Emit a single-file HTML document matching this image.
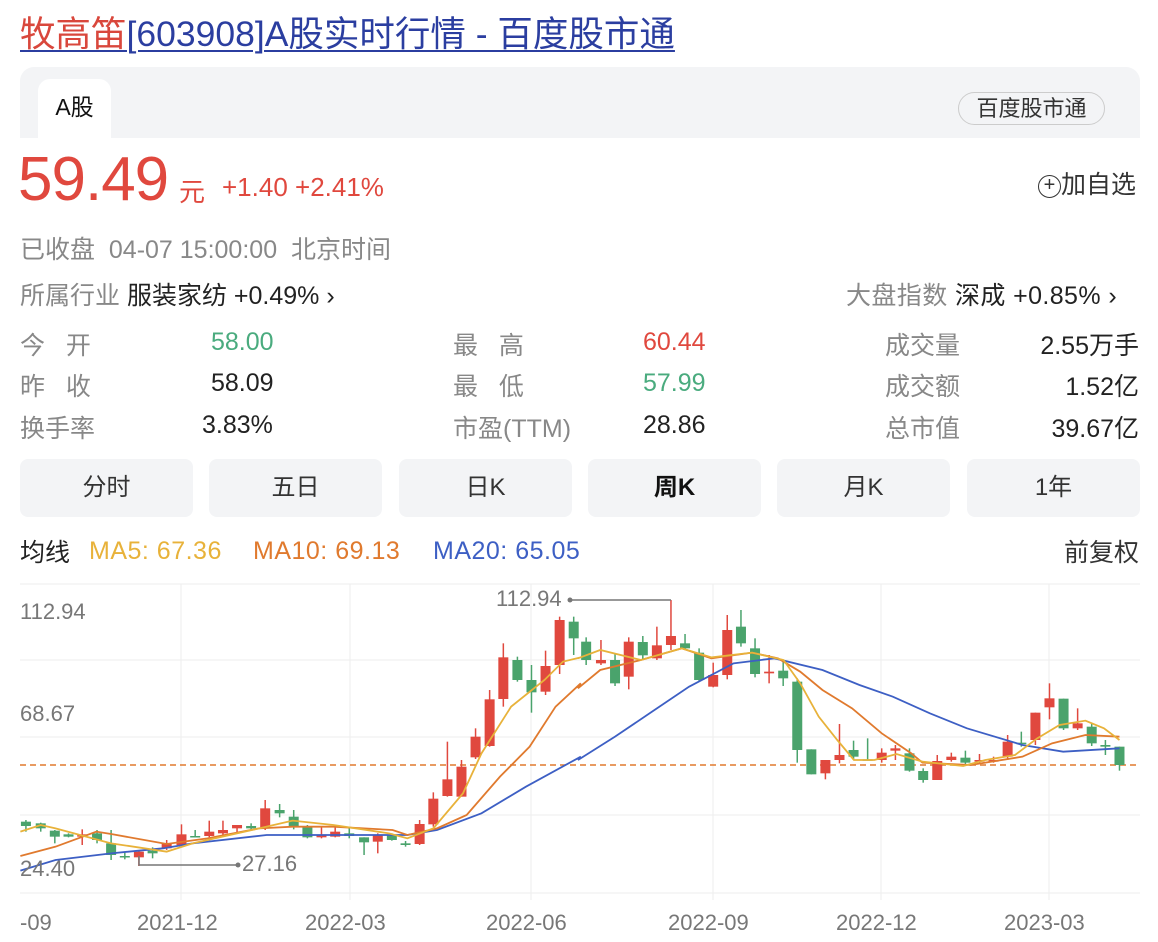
<!DOCTYPE html>
<html><head><meta charset="utf-8">
<style>
*{margin:0;padding:0;box-sizing:border-box}
body{width:1158px;height:942px;background:#fff;font-family:"Liberation Sans","Noto Sans CJK SC",sans-serif;position:relative;overflow:hidden;color:#222}
.a{position:absolute;white-space:nowrap}
.t{top:6px;left:20px;font-size:35.5px;color:#2b3ea0;text-decoration:underline;text-decoration-thickness:2px;text-underline-offset:4px}
.t span{color:#d9473c}
.card{top:67px;left:20px;width:1120px;height:71px;background:#f3f4f6;border-radius:14px 14px 0 0}
.tab{top:79px;left:38px;width:73px;height:59px;background:#fff;border-radius:12px 12px 0 0;font-size:23px;text-align:center;line-height:56px;color:#111}
.pill{top:92px;left:958px;width:147px;height:33px;border:1px solid #ccc;border-radius:17px;font-size:22px;line-height:31px;text-align:center;color:#333}
.lbl{font-size:25px;color:#888}
.val{font-size:25px;color:#222}
.red{color:#e0483e}.grn{color:#4aab7e}.gr{color:#888}
.btn{top:459px;height:58px;width:173px;background:#f3f4f6;border-radius:8px;font-size:24px;text-align:center;line-height:58px;color:#333}
.lg{top:533px;font-size:25px}
.lm{top:537px;font-size:25px;letter-spacing:0.5px}
</style></head><body>
<div class="a t"><span>牧高笛</span>[603908]A股实时行情 - 百度股市通</div>
<div class="a card"></div>
<div class="a tab">A股</div>
<div class="a pill">百度股市通</div>
<div class="a red" style="top:144px;left:18px;font-size:62px;letter-spacing:-1px">59.49</div>
<div class="a red" style="top:172px;left:179px;font-size:26px">元</div>
<div class="a red" style="top:172px;left:222px;font-size:26px">+1.40 +2.41%</div>
<div class="a" style="top:165px;left:1038px;font-size:25px;color:#333"><span style="display:inline-block;width:23px;height:23px;border:1.5px solid #333;border-radius:50%;text-align:center;line-height:19px;font-size:20px;vertical-align:2px">+</span>加自选</div>
<div class="a gr" style="top:230px;left:20px;font-size:25px">已收盘&nbsp; 04-07 15:00:00&nbsp; 北京时间</div>
<div class="a" style="top:276px;left:20px;font-size:25px"><span class="gr">所属行业</span> 服装家纺 +0.49% ›</div>
<div class="a" style="top:276px;left:846px;font-size:25px;letter-spacing:0.4px"><span class="gr">大盘指数</span> 深成 +0.85% ›</div>

<div class="a lbl" style="top:326px;left:20px">今&nbsp;&nbsp;&nbsp;开</div>
<div class="a val grn" style="top:328px;left:211px">58.00</div>
<div class="a lbl" style="top:367px;left:20px">昨&nbsp;&nbsp;&nbsp;收</div>
<div class="a val" style="top:369px;left:211px">58.09</div>
<div class="a lbl" style="top:409px;left:20px">换手率</div>
<div class="a val" style="top:411px;left:202px">3.83%</div>
<div class="a lbl" style="top:326px;left:453px">最&nbsp;&nbsp;&nbsp;高</div>
<div class="a val red" style="top:328px;left:643px">60.44</div>
<div class="a lbl" style="top:367px;left:453px">最&nbsp;&nbsp;&nbsp;低</div>
<div class="a val grn" style="top:369px;left:643px">57.99</div>
<div class="a lbl" style="top:409px;left:453px">市盈(TTM)</div>
<div class="a val" style="top:411px;left:643px">28.86</div>
<div class="a lbl" style="top:326px;left:885px">成交量</div>
<div class="a val" style="top:326px;right:19px">2.55万手</div>
<div class="a lbl" style="top:367px;left:885px">成交额</div>
<div class="a val" style="top:367px;right:19px">1.52亿</div>
<div class="a lbl" style="top:409px;left:885px">总市值</div>
<div class="a val" style="top:409px;right:19px">39.67亿</div>

<div class="a btn" style="left:20px">分时</div>
<div class="a btn" style="left:209px">五日</div>
<div class="a btn" style="left:399px">日K</div>
<div class="a btn" style="left:588px;font-weight:bold;color:#111">周K</div>
<div class="a btn" style="left:777px">月K</div>
<div class="a btn" style="left:967px">1年</div>

<div class="a lg" style="left:20px">均线</div>
<div class="a lm" style="left:89px;color:#e8b23a">MA5: 67.36</div>
<div class="a lm" style="left:253px;color:#e07a2e">MA10: 69.13</div>
<div class="a lm" style="left:433px;color:#3d5fc4">MA20: 65.05</div>
<div class="a lg" style="right:19px;color:#333">前复权</div>

<svg class="a" style="top:0;left:0" width="1158" height="942" id="ch">
<g stroke="#eee" stroke-width="1">
<line x1="20" x2="1140" y1="584" y2="584"/><line x1="20" x2="1140" y1="660" y2="660"/><line x1="20" x2="1140" y1="737" y2="737"/><line x1="20" x2="1140" y1="815" y2="815"/><line x1="20" x2="1140" y1="893" y2="893"/>
<line x1="181" x2="181" y1="584" y2="900"/><line x1="350" x2="350" y1="584" y2="900"/><line x1="531" x2="531" y1="584" y2="900"/><line x1="713" x2="713" y1="584" y2="900"/><line x1="881" x2="881" y1="584" y2="900"/><line x1="1049" x2="1049" y1="584" y2="900"/>
</g>
<line x1="20" x2="1140" y1="765" y2="765" stroke="#e07a2e" stroke-width="1.5" stroke-dasharray="6,4"/>
<g id="cd"></g>
<g id="ml" fill="none" stroke-width="1.8"></g>
<polyline points="139,856 139,865 238,865" fill="none" stroke="#777" stroke-width="1.5"/><circle cx="238" cy="865" r="2.5" fill="#777"/>
<polyline points="570,600 671,600 671,600" fill="none" stroke="#777" stroke-width="1.5"/><circle cx="570" cy="600" r="2.5" fill="#777"/>
<g font-family="Liberation Sans" font-size="22" fill="#777">
<text x="20" y="619">112.94</text><text x="20" y="721">68.67</text><text x="20" y="876">24.40</text>
<text x="242" y="871">27.16</text><text x="496" y="606">112.94</text>
<text x="20" y="930">-09</text><text x="137" y="930">2021-12</text><text x="305" y="930">2022-03</text><text x="486" y="930">2022-06</text><text x="668" y="930">2022-09</text><text x="836" y="930">2022-12</text><text x="1004" y="930">2023-03</text>
</g>
</svg>
<script>
var c1=[[70,'g',725,738,720,755],[110,'g',730,745,728,755],[148,'g',752,770,750,790],[185,'g',763,770,760,772],[222,'r',763,770,748,795],[262,'g',760,780,750,790],[300,'g',790,825,750,840],[337,'g',828,832,818,838],[375,'r',815,832,810,858],[412,'g',812,820,802,835],[450,'r',790,805,780,810],[490,'r',763,795,733,800],[527,'g',768,772,750,772],[565,'r',755,768,722,772],[602,'r',750,760,722,765],[640,'r',735,745,735,760],[678,'g',738,745,730,750],[716,'r',685,745,660,750],[755,'g',690,700,672,712],[793,'g',710,740,690,748],[830,'g',740,772,735,775],[868,'r',765,772,740,775],[905,'r',755,770,740,772],[943,'g',760,768,740,775],[983,'g',772,787,772,825],[1020,'r',765,785,760,820],[1058,'g',765,780,760,782],[1095,'g',790,795,783,800],[1133,'r',732,792,720,795],[1170,'r',656,733,637,740],[1208,'r',598,648,485,650],[1246,'r',560,650,540,650],[1284,'r',470,532,445,537],[1322,'r',358,498,330,500],[1359,'r',232,357,190,380],[1397,'g',240,300,230,305],[1435,'g',300,337,255,398],[1473,'r',258,335,212,345],[1511,'r',120,255,110,282],[1549,'g',125,175,110,225]];
var c2=[[22,'g',185,240,172,255],[62,'r',240,250,180,255],[100,'g',240,310,220,318],[137,'r',185,290,172,328],[175,'g',186,226,168,240],[213,'r',196,235,140,240],[251,'r',168,195,60,210],[289,'g',190,205,162,210],[327,'g',218,300,205,305],[365,'r',285,320,248,322],[403,'r',150,285,105,298],[440,'g',140,190,90,200],[478,'g',205,282,175,292],[516,'r',275,280,225,310],[554,'g',272,295,240,318],[592,'g',305,510,295,548],[630,'g',508,583,508,583],[668,'r',540,580,540,598],[706,'r',525,540,432,550],[744,'g',510,530,482,540],[782,'g',538,541,475,541],[820,'r',518,540,505,548],[857,'r',505,512,495,540],[895,'g',520,572,505,575],[932,'g',573,600,565,608],[970,'r',543,600,525,600],[1008,'r',530,540,518,545],[1046,'g',533,548,512,552],[1084,'r',540,545,522,550],[1122,'r',540,545,530,548],[1160,'r',485,530,465,540],[1197,'g',488,492,455,500],[1235,'r',398,480,398,495],[1273,'r',355,382,310,418],[1311,'g',356,445,356,450],[1349,'r',430,445,385,450],[1387,'g',440,490,432,498],[1424,'g',495,500,480,525],[1462,'g',500,555,500,572]];
var s='';
function add(a,ox){a.forEach(function(d){var x=d[0]/2.7+ox,col=d[1]=='r'?'#e0483e':'#4aa36c';var t=d[2]/3+580,b=d[3]/3+580,h=d[4]/3+580,l=d[5]/3+580;if(b-t<1.5)b=t+1.5;
s+='<line x1="'+x+'" x2="'+x+'" y1="'+h+'" y2="'+l+'" stroke="'+col+'" stroke-width="1.5"/><rect x="'+(x-5)+'" y="'+t+'" width="10" height="'+(b-t)+'" fill="'+col+'"/>';});}
add(c1,0);add(c2,578);document.getElementById('cd').innerHTML=s;
function pl(a,b,col){var p=[];a.forEach(function(q){p.push((q[0]/2.7)+','+(q[1]/3+580))});b.forEach(function(q){p.push((q[0]/2.7+578)+','+(q[1]/3+580))});return '<polyline points="'+p.join(' ')+'" stroke="'+col+'"/>';}
var m=pl([[55,872],[150,840],[300,820],[440,805],[520,790],[720,765],[850,765],[1100,765],[1180,750],[1300,700],[1420,620],[1568,530]],[[0,540],[100,470],[200,395],[300,320],[420,250],[530,235],[660,270],[760,315],[850,350],[950,400],[1050,445],[1200,495],[1310,515],[1462,505]],'#3d5fc4');
m+=pl([[55,828],[150,800],[260,755],[300,762],[450,792],[560,775],[700,745],[790,740],[900,740],[1060,750],[1100,765],[1180,745],[1260,705],[1350,590],[1430,500],[1500,380],[1568,310]],[[0,325],[60,270],[170,240],[280,205],[360,235],[470,218],[540,235],[600,275],[660,330],[740,385],[820,460],[900,520],[930,548],[1060,555],[1200,530],[1280,490],[1370,465],[1462,470]],'#e07a2e');
m+=pl([[55,755],[110,735],[150,745],[300,790],[450,815],[520,790],[720,740],[790,722],[900,735],[1050,760],[1100,775],[1170,745],[1250,640],[1300,520],[1380,380],[1470,300],[1520,245],[1568,232]],[[0,235],[60,210],[170,240],[280,205],[360,232],[470,218],[555,240],[600,310],[650,410],[700,480],[745,540],[800,540],[860,522],[930,545],[1040,558],[1100,540],[1180,525],[1240,475],[1300,435],[1370,422],[1420,445],[1462,480]],'#e8b23a');
document.getElementById('ml').innerHTML=m;
</script>
</body></html>
